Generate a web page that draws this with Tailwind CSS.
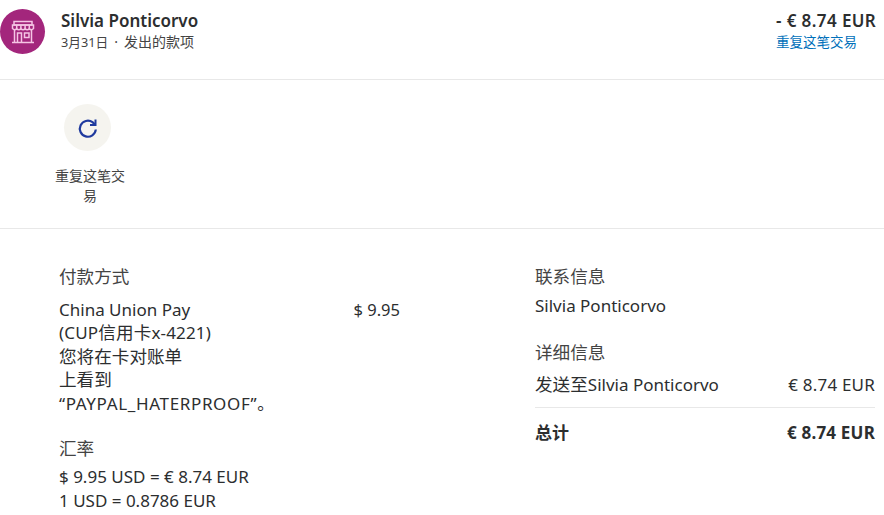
<!DOCTYPE html>
<html lang="zh">
<head>
  <meta charset="UTF-8">
  <title>交易详情</title>
  <script src="https://cdn.jsdelivr.net/npm/@tailwindcss/browser@4"></script>
</head>
<body class="bg-white text-[#2c2e2f] font-['Noto_Sans','Noto_Sans_CJK_SC',sans-serif] w-[884px] h-[515px] overflow-hidden">

  <!-- Header row -->
  <div class="h-[80px] border-b border-[#e8e8e8] flex justify-between pr-2">
    <div class="flex">
      <div class="w-[45px] h-[45px] mt-[9px] rounded-full bg-[#a3267c] flex items-center justify-center">
        <svg width="28" height="28" viewBox="0 0 28 28" fill="none" stroke="#f5c4e4" stroke-width="1.5">
          <path d="M5 3.500h18v3.500H5z"/>
          <path d="M3.500 7h21v3.500c-1.400 1.600-3.100 1.600-4.200 0-1.100 1.600-3.100 1.600-4.200 0-1.100 1.600-3.100 1.600-4.200 0-1.100 1.600-3.100 1.600-4.200 0-1.100 1.600-2.800 1.600-4.200 0z"/>
          <path d="M7.700 7v3.500M11.900 7v3.500M16.100 7v3.500M20.300 7v3.500"/>
          <path d="M5.500 12v12M22.500 12v12M3 24.500h22"/>
          <path d="M8.500 24v-9h4v9M15.500 15h4.500v4.500h-4.500z"/>
        </svg>
      </div>
      <div class="ml-4 mt-[10px]">
        <div class="text-[17px] leading-[22px] font-semibold">Silvia Ponticorvo</div>
        <div class="text-[14px] leading-[20px] text-[#444]"><span class="text-[12.7px]">3月31日</span><span class="mx-[6px]">·</span>发出的款项</div>
      </div>
    </div>
    <div class="mt-[10px] w-[100px]">
      <div class="text-[17px] leading-[22px] font-semibold whitespace-nowrap tracking-[0.4px]">- € 8.74 EUR</div>
      <div class="text-[13.5px] leading-[20px] text-[#0070ba]">重复这笔交易</div>
    </div>
  </div>

  <!-- Action -->
  <div class="h-[149px] border-b border-[#e8e8e8] pl-[54px] pt-[24px]">
    <div class="w-[72px] flex flex-col items-start">
      <div class="w-[47px] h-[47px] ml-[10px] rounded-full bg-[#f5f4ef] flex items-center justify-center">
        <svg width="24" height="24" viewBox="0 0 24 24" fill="none" stroke="#1f3a9e" stroke-width="2.200">
          <path d="M19.800 13.500A8 8 0 1 1 16.500 6.200L19 8.500"/>
          <path d="M19.500 3.500v5.500h-5.500" stroke-width="2"/>
        </svg>
      </div>
      <div class="w-full text-[14px] leading-[20px] text-center text-[#444] mt-[15px]">重复这笔交易</div>
    </div>
  </div>

  <!-- Details -->
  <div class="flex pl-[59px] pr-[9px] pt-[35px]">
    <div class="w-[341px] text-[17px] leading-[23.4px]">
      <div class="text-[17.6px] leading-[24px] text-[#444]">付款方式</div>
      <div class="flex justify-between mt-[10px]">
        <div class="w-[225px]">
          <div>China Union Pay</div>
          <div class="tracking-[0.15px]">(CUP<span class="text-[17.6px]">信用卡</span>x-4221)</div>
          <div class="text-[17.6px]">您将在卡对账单</div>
          <div class="text-[17.6px]">上看到</div>
          <div class="tracking-[0.65px]">“PAYPAL_HATERPROOF”。</div>
        </div>
        <div class="text-[16.5px]">$ 9.95</div>
      </div>
      <div class="text-[17.6px] leading-[24px] text-[#444] mt-[21px]">汇率</div>
      <div class="mt-[5px]">$ 9.95 USD = € 8.74 EUR</div>
      <div class="mt-[1px]">1 USD = 0.8786 EUR</div>
    </div>
    <div class="ml-[135px] flex-1 text-[17px] leading-[23px]">
      <div class="text-[17.6px] leading-[24px] text-[#444]">联系信息</div>
      <div class="mt-[6px]">Silvia Ponticorvo</div>
      <div class="text-[17.6px] leading-[24px] text-[#444] mt-[23px]">详细信息</div>
      <div class="flex justify-between mt-[9px] pb-[11px] border-b border-[#e8e8e8]">
        <span><span class="text-[17.6px]">发送至</span>Silvia Ponticorvo</span><span class="tracking-[0.2px]">€ 8.74 EUR</span>
      </div>
      <div class="flex justify-between mt-[13px] font-bold">
        <span>总计</span><span class="tracking-[0.2px]">€ 8.74 EUR</span>
      </div>
    </div>
  </div>

</body>
</html>
